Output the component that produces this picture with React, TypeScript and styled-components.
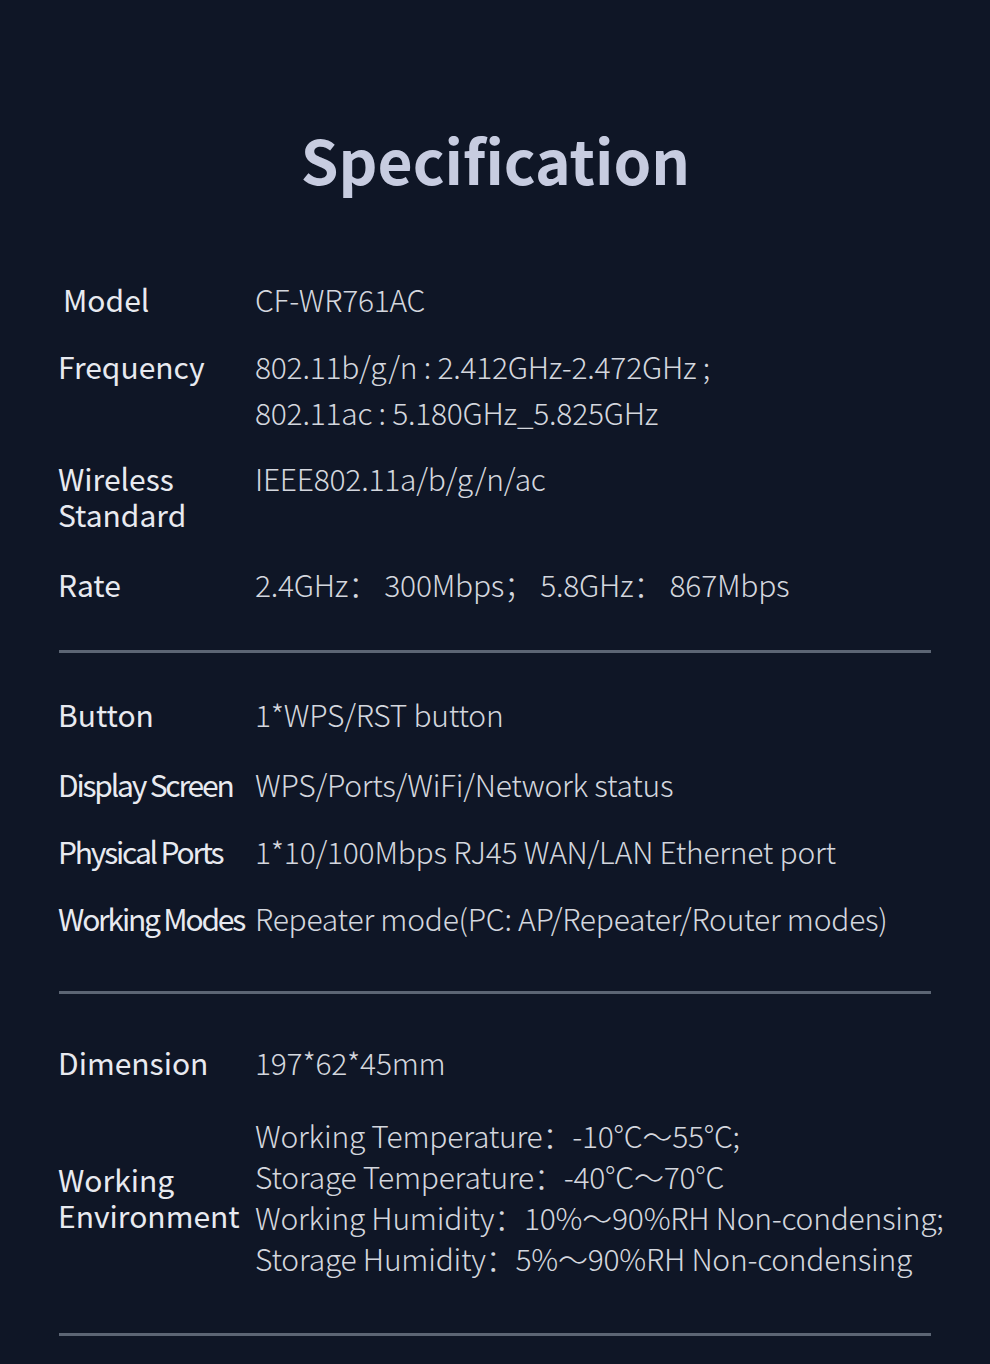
import React from "react";
import styled, { createGlobalStyle } from "styled-components";

const Global = createGlobalStyle`
  html, body { margin: 0; padding: 0; background: #0f1626; }
  * { box-sizing: border-box; }
`;

const Page = styled.div`
  width: 990px;
  min-height: 1364px;
  background: #0f1626;
  font-family: "Noto Sans CJK SC", "Noto Sans", sans-serif;
  padding: 120px 60px 0 58px;
  overflow: hidden;
`;

const Title = styled.h1`
  margin: 0;
  text-align: center;
  font-size: 60.5px;
  line-height: 78px;
  font-weight: 700;
  color: #c7cce0;
  padding-left: 3px;
`;

const Section = styled.section<{ $top: number; $bottom: number }>`
  display: flex;
  flex-direction: column;
  padding-top: ${(p) => p.$top}px;
  padding-bottom: ${(p) => p.$bottom}px;
`;

const Row = styled.div<{ $gap?: number; $center?: boolean }>`
  display: grid;
  grid-template-columns: 197px 1fr;
  align-items: ${(p) => (p.$center ? "center" : "start")};
  margin-top: ${(p) => p.$gap ?? 0}px;
`;

const Label = styled.div<{ $shift?: number; $condensed?: boolean; $pt?: number }>`
  font-size: 30px;
  line-height: 36px;
  padding-top: ${(p) => p.$pt ?? 5}px;
  padding-left: ${(p) => p.$shift ?? 0}px;
  color: #e8eaf0;
  font-weight: 400;
  white-space: nowrap;
  letter-spacing: ${(p) => (p.$condensed ? "-2.2px" : "0")};
`;

const Values = styled.div<{ $lh?: number }>`
  display: flex;
  flex-direction: column;
  font-size: 30px;
  line-height: ${(p) => p.$lh ?? 46}px;
  color: #d4d7de;
  font-weight: 300;
  white-space: nowrap;
  letter-spacing: -0.25px;
`;

const Divider = styled.hr`
  margin: 0;
  border: none;
  height: 3px;
  width: 872px;
  background: #5c6574;
  margin-left: 1px;
`;

export default function App() {
  return (
    <Page>
      <Global />
      <Title>Specification</Title>

      <Section $top={78} $bottom={43}>
        <Row>
          <Label $shift={5}>Model</Label>
          <Values>
            <span>CF-WR761AC</span>
          </Values>
        </Row>
        <Row $gap={21}>
          <Label>Frequency</Label>
          <Values>
            <span>802.11b/g/n : 2.412GHz-2.472GHz ;</span>
            <span>802.11ac : 5.180GHz_5.825GHz</span>
          </Values>
        </Row>
        <Row $gap={20}>
          <Label>
            Wireless
            <br />
            Standard
          </Label>
          <Values>
            <span>IEEE802.11a/b/g/n/ac</span>
          </Values>
        </Row>
        <Row $gap={29}>
          <Label>Rate</Label>
          <Values>
            <span>2.4GHz： 300Mbps； 5.8GHz： 867Mbps</span>
          </Values>
        </Row>
      </Section>
      <Divider />

      <Section $top={38} $bottom={50}>
        <Row>
          <Label>Button</Label>
          <Values>
            <span>1*WPS/RST button</span>
          </Values>
        </Row>
        <Row $gap={24}>
          <Label $condensed>Display Screen</Label>
          <Values>
            <span>WPS/Ports/WiFi/Network status</span>
          </Values>
        </Row>
        <Row $gap={21}>
          <Label $condensed>Physical Ports</Label>
          <Values>
            <span>1*10/100Mbps RJ45 WAN/LAN Ethernet port</span>
          </Values>
        </Row>
        <Row $gap={21}>
          <Label $condensed>Working Modes</Label>
          <Values>
            <span>Repeater mode(PC: AP/Repeater/Router modes)</span>
          </Values>
        </Row>
      </Section>
      <Divider />

      <Section $top={45} $bottom={54}>
        <Row>
          <Label>Dimension</Label>
          <Values>
            <span>197*62*45mm</span>
          </Values>
        </Row>
        <Row $gap={30} $center>
          <Label $pt={0}>
            Working
            <br />
            Environment
          </Label>
          <Values $lh={41}>
            <span>Working Temperature：-10°C～55°C;</span>
            <span>Storage Temperature：-40°C～70°C</span>
            <span>Working Humidity：10%～90%RH Non-condensing;</span>
            <span>Storage Humidity：5%～90%RH Non-condensing</span>
          </Values>
        </Row>
      </Section>
      <Divider />
    </Page>
  );
}
